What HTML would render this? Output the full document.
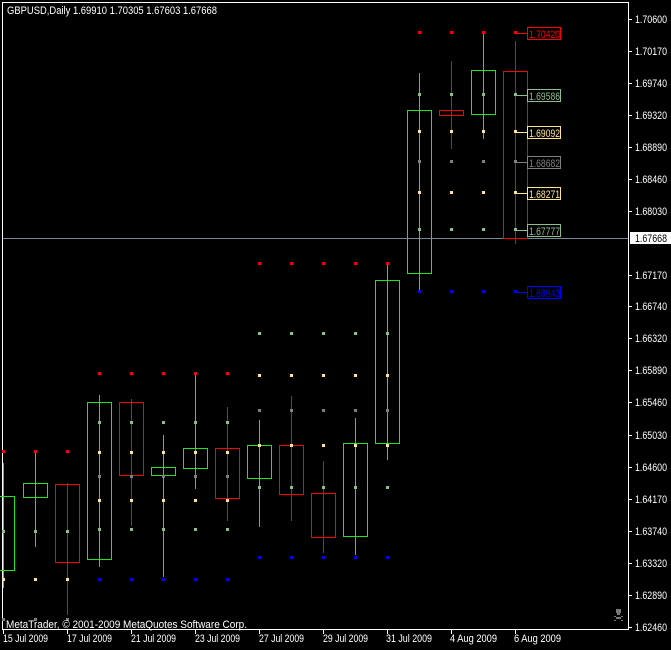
<!DOCTYPE html>
<html><head><meta charset="utf-8"><style>
html,body{margin:0;padding:0;background:#000;width:671px;height:650px;overflow:hidden}
svg{display:block}
text{font-family:"Liberation Sans",sans-serif;font-size:11px}
</style></head><body>
<svg width="671" height="650" viewBox="0 0 671 650" shape-rendering="crispEdges">
<defs><g id="d"><rect x="-1" y="-1" width="3" height="3"/></g></defs>
<rect width="671" height="650" fill="#000"/>
<rect x="2.5" y="2.5" width="626" height="627" fill="none" stroke="#fff"/>
<text x="7" y="14" fill="#fff" textLength="210" lengthAdjust="spacingAndGlyphs">GBPUSD,Daily  1.69910 1.70305 1.67603 1.67668</text>
<line x1="3" y1="238.5" x2="628" y2="238.5" stroke="#778899"/>
<g fill="#fff">
<text x="635" y="23" textLength="32" lengthAdjust="spacingAndGlyphs">1.70600</text><text x="635" y="55" textLength="32" lengthAdjust="spacingAndGlyphs">1.70170</text><text x="635" y="87" textLength="32" lengthAdjust="spacingAndGlyphs">1.69740</text>
<text x="635" y="119" textLength="32" lengthAdjust="spacingAndGlyphs">1.69320</text><text x="635" y="151" textLength="32" lengthAdjust="spacingAndGlyphs">1.68890</text><text x="635" y="183" textLength="32" lengthAdjust="spacingAndGlyphs">1.68460</text>
<text x="635" y="215" textLength="32" lengthAdjust="spacingAndGlyphs">1.68030</text><text x="635" y="279" textLength="32" lengthAdjust="spacingAndGlyphs">1.67170</text><text x="635" y="310" textLength="32" lengthAdjust="spacingAndGlyphs">1.66740</text>
<text x="635" y="342" textLength="32" lengthAdjust="spacingAndGlyphs">1.66320</text><text x="635" y="374" textLength="32" lengthAdjust="spacingAndGlyphs">1.65890</text><text x="635" y="406" textLength="32" lengthAdjust="spacingAndGlyphs">1.65460</text>
<text x="635" y="439" textLength="32" lengthAdjust="spacingAndGlyphs">1.65030</text><text x="635" y="471" textLength="32" lengthAdjust="spacingAndGlyphs">1.64600</text><text x="635" y="503" textLength="32" lengthAdjust="spacingAndGlyphs">1.64170</text>
<text x="635" y="535" textLength="32" lengthAdjust="spacingAndGlyphs">1.63740</text><text x="635" y="567" textLength="32" lengthAdjust="spacingAndGlyphs">1.63320</text><text x="635" y="599" textLength="32" lengthAdjust="spacingAndGlyphs">1.62890</text>
<text x="635" y="631" textLength="32" lengthAdjust="spacingAndGlyphs">1.62460</text>
</g>
<g stroke="#fff">
<line x1="629" y1="19.5" x2="632" y2="19.5"/><line x1="629" y1="51.5" x2="632" y2="51.5"/><line x1="629" y1="83.5" x2="632" y2="83.5"/>
<line x1="629" y1="115.5" x2="632" y2="115.5"/><line x1="629" y1="147.5" x2="632" y2="147.5"/><line x1="629" y1="179.5" x2="632" y2="179.5"/>
<line x1="629" y1="211.5" x2="632" y2="211.5"/><line x1="629" y1="275.5" x2="632" y2="275.5"/><line x1="629" y1="306.5" x2="632" y2="306.5"/>
<line x1="629" y1="338.5" x2="632" y2="338.5"/><line x1="629" y1="370.5" x2="632" y2="370.5"/><line x1="629" y1="402.5" x2="632" y2="402.5"/>
<line x1="629" y1="435.5" x2="632" y2="435.5"/><line x1="629" y1="467.5" x2="632" y2="467.5"/><line x1="629" y1="499.5" x2="632" y2="499.5"/>
<line x1="629" y1="531.5" x2="632" y2="531.5"/><line x1="629" y1="563.5" x2="632" y2="563.5"/><line x1="629" y1="595.5" x2="632" y2="595.5"/>
<line x1="629" y1="627.5" x2="632" y2="627.5"/>
</g>
<rect x="630" y="232" width="41" height="12" fill="#fff"/>
<text x="635" y="242" fill="#000" textLength="32" lengthAdjust="spacingAndGlyphs">1.67668</text>
<g stroke="#fff">
<line x1="3.5" y1="630" x2="3.5" y2="634"/><line x1="67.5" y1="630" x2="67.5" y2="634"/><line x1="131.5" y1="630" x2="131.5" y2="634"/>
<line x1="195.5" y1="630" x2="195.5" y2="634"/><line x1="259.5" y1="630" x2="259.5" y2="634"/><line x1="323.5" y1="630" x2="323.5" y2="634"/>
<line x1="387.5" y1="630" x2="387.5" y2="634"/><line x1="451.5" y1="630" x2="451.5" y2="634"/><line x1="515.5" y1="630" x2="515.5" y2="634"/>
</g>
<g fill="#fff">
<text x="3" y="642" textLength="45" lengthAdjust="spacingAndGlyphs">15 Jul 2009</text><text x="67" y="642" textLength="45" lengthAdjust="spacingAndGlyphs">17 Jul 2009</text><text x="131" y="642" textLength="45" lengthAdjust="spacingAndGlyphs">21 Jul 2009</text>
<text x="195" y="642" textLength="45" lengthAdjust="spacingAndGlyphs">23 Jul 2009</text><text x="259" y="642" textLength="45" lengthAdjust="spacingAndGlyphs">27 Jul 2009</text><text x="323" y="642" textLength="45" lengthAdjust="spacingAndGlyphs">29 Jul 2009</text>
<text x="386" y="642" textLength="46" lengthAdjust="spacingAndGlyphs">31 Jul 2009</text><text x="450" y="642" textLength="47" lengthAdjust="spacingAndGlyphs">4 Aug 2009</text><text x="514" y="642" textLength="47" lengthAdjust="spacingAndGlyphs">6 Aug 2009</text>
</g>
<g fill="none" stroke-width="1">
<g stroke="#1ee61e">
<line x1="3.5" y1="463" x2="3.5" y2="588"/><rect x="-9.5" y="496.5" width="24" height="74"/>
<line x1="35.5" y1="453" x2="35.5" y2="547"/><rect x="23.5" y="483.5" width="24" height="14"/>
<line x1="99.5" y1="395" x2="99.5" y2="567"/><rect x="87.5" y="402.5" width="24" height="157"/>
<line x1="163.5" y1="435" x2="163.5" y2="577"/><rect x="151.5" y="467.5" width="24" height="8"/>
<line x1="195.5" y1="373" x2="195.5" y2="489"/><rect x="183.5" y="448.5" width="24" height="20"/>
<line x1="259.5" y1="420" x2="259.5" y2="527"/><rect x="247.5" y="445.5" width="24" height="33"/>
<line x1="355.5" y1="418" x2="355.5" y2="555"/><rect x="343.5" y="443.5" width="24" height="93"/>
<line x1="387.5" y1="263" x2="387.5" y2="460"/><rect x="375.5" y="280.5" width="24" height="163"/>
<line x1="419.5" y1="73" x2="419.5" y2="290"/><rect x="407.5" y="110.5" width="24" height="163"/>
<line x1="483.5" y1="32" x2="483.5" y2="139"/><rect x="471.5" y="70.5" width="24" height="44"/>
</g>
<g stroke="#ff0000">
<line x1="67.5" y1="483" x2="67.5" y2="615"/><rect x="55.5" y="484.5" width="24" height="78"/>
<line x1="131.5" y1="399" x2="131.5" y2="526"/><rect x="119.5" y="402.5" width="24" height="73"/>
<line x1="227.5" y1="407" x2="227.5" y2="521"/><rect x="215.5" y="448.5" width="24" height="50"/>
<line x1="291.5" y1="396" x2="291.5" y2="521"/><rect x="279.5" y="445.5" width="24" height="49"/>
<line x1="323.5" y1="461" x2="323.5" y2="553"/><rect x="311.5" y="493.5" width="24" height="44"/>
<line x1="451.5" y1="61" x2="451.5" y2="149"/><rect x="439.5" y="110.5" width="24" height="5"/>
<line x1="515.5" y1="41" x2="515.5" y2="244"/><rect x="503.5" y="71.5" width="24" height="167"/>
</g>
</g>
<g fill="#ff0000">
<use href="#d" x="3" y="451"/><use href="#d" x="35" y="451"/><use href="#d" x="67" y="451"/>
<use href="#d" x="99" y="373"/><use href="#d" x="131" y="373"/><use href="#d" x="163" y="373"/><use href="#d" x="195" y="373"/><use href="#d" x="227" y="373"/>
<use href="#d" x="259" y="263"/><use href="#d" x="291" y="263"/><use href="#d" x="323" y="263"/><use href="#d" x="355" y="263"/><use href="#d" x="387" y="263"/>
<use href="#d" x="419" y="32"/><use href="#d" x="451" y="32"/><use href="#d" x="483" y="32"/><use href="#d" x="515" y="32"/>
</g>
<g fill="#8fbc8f">
<use href="#d" x="3" y="531"/><use href="#d" x="35" y="531"/><use href="#d" x="67" y="531"/>
<use href="#d" x="99" y="422"/><use href="#d" x="131" y="422"/><use href="#d" x="163" y="422"/><use href="#d" x="195" y="422"/><use href="#d" x="227" y="422"/>
<use href="#d" x="99" y="529"/><use href="#d" x="131" y="529"/><use href="#d" x="163" y="529"/><use href="#d" x="195" y="529"/><use href="#d" x="227" y="529"/>
<use href="#d" x="259" y="333"/><use href="#d" x="291" y="333"/><use href="#d" x="323" y="333"/><use href="#d" x="355" y="333"/><use href="#d" x="387" y="333"/>
<use href="#d" x="259" y="487"/><use href="#d" x="291" y="487"/><use href="#d" x="323" y="487"/><use href="#d" x="355" y="487"/><use href="#d" x="387" y="487"/>
<use href="#d" x="419" y="94"/><use href="#d" x="451" y="94"/><use href="#d" x="483" y="94"/><use href="#d" x="515" y="94"/>
<use href="#d" x="419" y="229"/><use href="#d" x="451" y="229"/><use href="#d" x="483" y="229"/><use href="#d" x="515" y="229"/>
</g>
<g fill="#ffe38f">
<use href="#d" x="3" y="579"/><use href="#d" x="35" y="579"/><use href="#d" x="67" y="579"/>
<use href="#d" x="99" y="452"/><use href="#d" x="131" y="452"/><use href="#d" x="163" y="452"/><use href="#d" x="195" y="452"/><use href="#d" x="227" y="452"/>
<use href="#d" x="99" y="500"/><use href="#d" x="131" y="500"/><use href="#d" x="163" y="500"/><use href="#d" x="195" y="500"/><use href="#d" x="227" y="500"/>
<use href="#d" x="259" y="375"/><use href="#d" x="291" y="375"/><use href="#d" x="323" y="375"/><use href="#d" x="355" y="375"/><use href="#d" x="387" y="375"/>
<use href="#d" x="259" y="445"/><use href="#d" x="291" y="445"/><use href="#d" x="323" y="445"/><use href="#d" x="355" y="445"/><use href="#d" x="387" y="445"/>
<use href="#d" x="419" y="131"/><use href="#d" x="451" y="131"/><use href="#d" x="483" y="131"/><use href="#d" x="515" y="131"/>
<use href="#d" x="419" y="192"/><use href="#d" x="451" y="192"/><use href="#d" x="483" y="192"/><use href="#d" x="515" y="192"/>
</g>
<g fill="#808080">
<use href="#d" x="3" y="619"/><use href="#d" x="35" y="619"/><use href="#d" x="67" y="619"/>
<use href="#d" x="99" y="476"/><use href="#d" x="131" y="476"/><use href="#d" x="163" y="476"/><use href="#d" x="195" y="476"/><use href="#d" x="227" y="476"/>
<use href="#d" x="259" y="410"/><use href="#d" x="291" y="410"/><use href="#d" x="323" y="410"/><use href="#d" x="355" y="410"/><use href="#d" x="387" y="410"/>
<use href="#d" x="419" y="161"/><use href="#d" x="451" y="161"/><use href="#d" x="483" y="161"/><use href="#d" x="515" y="161"/>
</g>
<g fill="#0000ff">
<use href="#d" x="99" y="579"/><use href="#d" x="131" y="579"/><use href="#d" x="163" y="579"/><use href="#d" x="195" y="579"/><use href="#d" x="227" y="579"/>
<use href="#d" x="259" y="557"/><use href="#d" x="291" y="557"/><use href="#d" x="323" y="557"/><use href="#d" x="355" y="557"/><use href="#d" x="387" y="557"/>
<use href="#d" x="419" y="291"/><use href="#d" x="451" y="291"/><use href="#d" x="483" y="291"/><use href="#d" x="515" y="291"/>
</g>
<g fill="none">
<path d="M516 33.5H527" stroke="#ff0000"/><rect x="527.5" y="27.5" width="33" height="12" stroke="#ff0000"/>
<path d="M516 95.5H527" stroke="#8fbc8f"/><rect x="527.5" y="89.5" width="33" height="12" stroke="#8fbc8f"/>
<path d="M516 132.5H527" stroke="#ffe38f"/><rect x="527.5" y="126.5" width="33" height="12" stroke="#ffe38f"/>
<path d="M516 162.5H527" stroke="#808080"/><rect x="527.5" y="156.5" width="33" height="12" stroke="#808080"/>
<path d="M516 193.5H527" stroke="#ffe38f"/><rect x="527.5" y="187.5" width="33" height="12" stroke="#ffe38f"/>
<path d="M516 230.5H527" stroke="#8fbc8f"/><rect x="527.5" y="224.5" width="33" height="12" stroke="#8fbc8f"/>
<path d="M516 292.5H527" stroke="#0000ff"/><rect x="527.5" y="286.5" width="33" height="12" stroke="#0000ff"/>
</g>
<text x="529" y="38" fill="#ff0000" textLength="31" lengthAdjust="spacingAndGlyphs">1.70420</text>
<text x="529" y="100" fill="#8fbc8f" textLength="31" lengthAdjust="spacingAndGlyphs">1.69586</text>
<text x="529" y="137" fill="#ffe38f" textLength="31" lengthAdjust="spacingAndGlyphs">1.69092</text>
<text x="529" y="167" fill="#808080" textLength="31" lengthAdjust="spacingAndGlyphs">1.68682</text>
<text x="529" y="198" fill="#ffe38f" textLength="31" lengthAdjust="spacingAndGlyphs">1.68271</text>
<text x="529" y="235" fill="#8fbc8f" textLength="31" lengthAdjust="spacingAndGlyphs">1.67777</text>
<text x="529" y="297" fill="#0000ff" textLength="31" lengthAdjust="spacingAndGlyphs">1.66943</text>
<text x="6" y="628" fill="#fff" textLength="241" lengthAdjust="spacingAndGlyphs">MetaTrader, © 2001-2009 MetaQuotes Software Corp.</text>
<g fill="#777">
<rect x="616" y="609" width="5" height="4"/><rect x="617" y="613" width="3" height="2"/>
<rect x="614" y="616" width="2" height="1"/><rect x="621" y="616" width="2" height="1"/>
<rect x="616" y="617" width="5" height="2"/><rect x="614" y="620" width="2" height="1"/><rect x="621" y="620" width="2" height="1"/>
</g>
</svg>
</body></html>
